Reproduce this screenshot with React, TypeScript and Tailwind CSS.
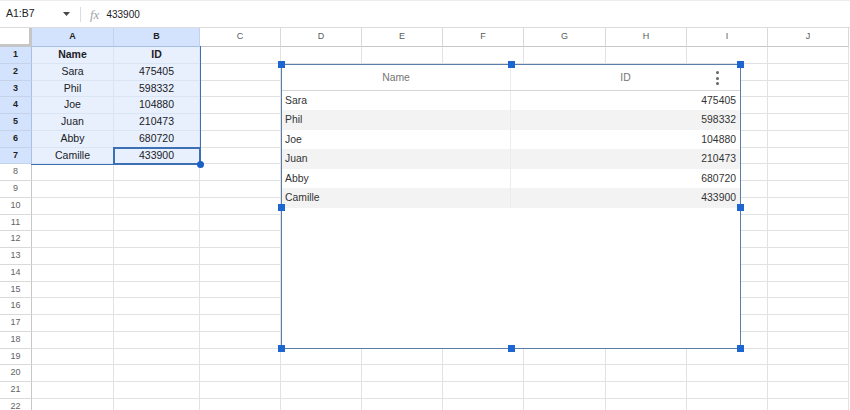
const cols = [
  { key: 'A', w: 'w-[82px]', sel: true },
  { key: 'B', w: 'w-[86px]', sel: true },
  { key: 'C', w: 'w-[81px]', sel: false },
  { key: 'D', w: 'w-[81px]', sel: false },
  { key: 'E', w: 'w-[81px]', sel: false },
  { key: 'F', w: 'w-[81px]', sel: false },
  { key: 'G', w: 'w-[82px]', sel: false },
  { key: 'H', w: 'w-[81px]', sel: false },
  { key: 'I', w: 'w-[81px]', sel: false },
  { key: 'J', w: 'w-[81px]', sel: false },
]

const people = [
  ['Sara', '475405'],
  ['Phil', '598332'],
  ['Joe', '104880'],
  ['Juan', '210473'],
  ['Abby', '680720'],
  ['Camille', '433900'],
]

const sheetRows = [['Name', 'ID'], ...people]

const Handle = ({ className }: { className: string }) => (
  <div className={`absolute w-[7px] h-[7px] bg-[#1b66d0] ${className}`} />
)

const App = () => {
  return (
    <div className="w-[850px] h-[410px] overflow-hidden bg-white font-['Liberation_Sans',Arial,sans-serif] text-[#202124]">
      {/* Formula bar */}
      <div className="h-[28px] flex items-center border-t border-t-[#ececec] border-b border-b-[#dadce0]">
        <div className="w-[80px] flex items-center justify-between pl-[6px] pr-[10px] text-[10.5px]">
          <span>A1:B7</span>
          <svg width="7" height="4" viewBox="0 0 7 4">
            <path d="M0 0h7L3.5 4z" fill="#444746" />
          </svg>
        </div>
        <div className="w-px h-[15px] bg-[#dadce0]" />
        <span className="ml-[9px] text-[#a0a4a8] italic text-[13px] leading-none font-['Liberation_Serif',serif]">fx</span>
        <span className="ml-[7px] text-[10px]">433900</span>
      </div>

      {/* Grid */}
      <div className="relative">
        <div className="flex h-[19px]">
          <div className="w-[32px] shrink-0 border-r-[3px] border-b-[3px] border-[#c4c7c5] bg-white" />
          {cols.map((c) => (
            <div
              key={c.key}
              className={`${c.w} shrink-0 flex items-center justify-center text-[9px] border-r border-b ${
                c.sel
                  ? 'bg-[#d3e3fd] border-r-[#c5d3e8] border-b-[#a8c0e4] font-bold text-[#1f1f1f]'
                  : 'border-r-[#d9d9d9] border-b-[#c7c7c7] text-[#575b5f]'
              }`}
            >
              {c.key}
            </div>
          ))}
        </div>

        {Array.from({ length: 22 }, (_, r) => {
          const data = sheetRows[r]
          const selRow = r < 7
          return (
            <div key={r} className="flex h-[16.75px]">
              <div
                className={`w-[32px] shrink-0 flex items-center justify-center text-[9px] border-r border-b ${
                  selRow
                    ? 'bg-[#d3e3fd] font-bold text-[#1f1f1f] border-r-[#a8c0e4] border-b-[#c5d3e8]'
                    : 'bg-white text-[#5f6368] border-r-[#c7c7c7] border-b-[#d9d9d9]'
                }`}
              >
                {r + 1}
              </div>
              {cols.map((c, ci) => (
                <div
                  key={c.key}
                  className={`${c.w} shrink-0 flex items-center justify-center text-[10.5px] border-r border-b ${
                    selRow && c.sel ? 'bg-[#e8f0fe] border-[#dbe4f3]' : 'border-[#e2e2e2]'
                  } ${r === 0 ? 'font-bold' : ''}`}
                >
                  {data && ci < 2 ? data[ci] : ''}
                </div>
              ))}
            </div>
          )
        })}

        {/* Selection A1:B7 */}
        <div className="absolute left-[31px] top-[18px] w-[170px] h-[118.5px] border-r border-b border-[#3d6fb5] pointer-events-none" />
        <div className="absolute left-[113px] top-[118.5px] w-[88px] h-[18px] border-2 border-[#3d6fb5] pointer-events-none" />
        <div className="absolute left-[197px] top-[133px] w-[7px] h-[7px] rounded-full bg-[#1b5fc9]" />

        {/* Table chart */}
        <div className="absolute left-[281px] top-[36px] w-[460px] h-[285px] bg-white border border-[#5a7ea8]">
          <div className="flex h-[26px] border-b border-[#d5d5d5] text-[10.4px] text-[#757575]">
            <div className="w-[229px] flex items-center justify-center border-r border-[#ececec]">Name</div>
            <div className="flex-1 relative flex items-center justify-center">
              ID
              <div className="absolute right-[21px] top-[6px] flex flex-col gap-[2.5px]">
                <span className="w-[3px] h-[3px] rounded-full bg-[#666]" />
                <span className="w-[3px] h-[3px] rounded-full bg-[#666]" />
                <span className="w-[3px] h-[3px] rounded-full bg-[#666]" />
              </div>
            </div>
          </div>
          {people.map(([name, id], i) => (
            <div
              key={name}
              className={`flex h-[19.45px] text-[10.4px] text-[#333] ${i % 2 === 1 ? 'bg-[#f3f3f3]' : 'bg-white'}`}
            >
              <div className="w-[229px] flex items-center pl-[3px] border-r border-[#ececec]">{name}</div>
              <div className="flex-1 flex items-center justify-end pr-[4px]">{id}</div>
            </div>
          ))}

          <Handle className="-left-[4px] -top-[4px]" />
          <Handle className="left-[226px] -top-[4px]" />
          <Handle className="-right-[4px] -top-[4px]" />
          <Handle className="-left-[4px] top-[139px]" />
          <Handle className="-right-[4px] top-[139px]" />
          <Handle className="-left-[4px] -bottom-[4px]" />
          <Handle className="left-[226px] -bottom-[4px]" />
          <Handle className="-right-[4px] -bottom-[4px]" />
        </div>
      </div>
    </div>
  )
}

export default App
